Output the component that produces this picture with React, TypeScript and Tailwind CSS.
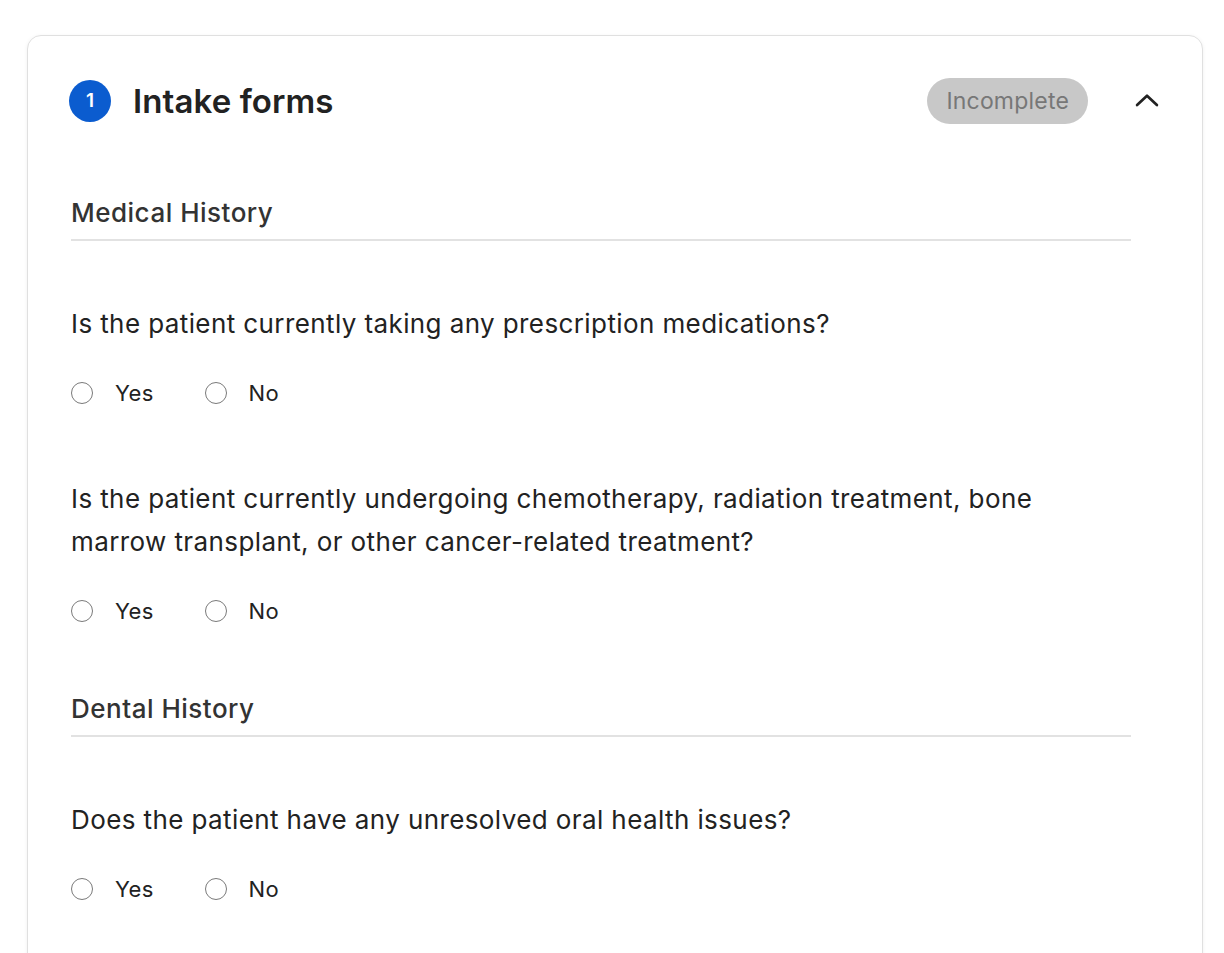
import { useState } from "react";

type Question = {
  id: string;
  text: string;
};

type Section = {
  title: string;
  questions: Question[];
};

const sections: Section[] = [
  {
    title: "Medical History",
    questions: [
      { id: "rx", text: "Is the patient currently taking any prescription medications?" },
      {
        id: "cancer",
        text: "Is the patient currently undergoing chemotherapy, radiation treatment, bone marrow transplant, or other cancer-related treatment?",
      },
    ],
  },
  {
    title: "Dental History",
    questions: [{ id: "oral", text: "Does the patient have any unresolved oral health issues?" }],
  },
];

const RadioOption = ({
  label,
  checked,
  onSelect,
}: {
  label: string;
  checked: boolean;
  onSelect: () => void;
}) => (
  <label className="flex items-center gap-[22px] cursor-pointer" onClick={onSelect}>
    <span className="flex h-[22px] w-[22px] items-center justify-center rounded-full border-[1.5px] border-[#7a7a7a] bg-white">
      {checked && <span className="h-[12px] w-[12px] rounded-full bg-[#0b5ccf]" />}
    </span>
    <span className="text-[22px] leading-[30px] text-[#222] tracking-[0.3px]">{label}</span>
  </label>
);

const QuestionBlock = ({ q, first }: { q: Question; first: boolean }) => {
  const [answer, setAnswer] = useState<string | null>(null);
  return (
    <div className={first ? "mt-[61px]" : "mt-[69px]"}>
      <p className="text-[26px] leading-[43px] text-[#222] tracking-[0.4px]">{q.text}</p>
      <div className="mt-[33px] flex items-center gap-[51px]">
        <RadioOption label="Yes" checked={answer === "yes"} onSelect={() => setAnswer("yes")} />
        <RadioOption label="No" checked={answer === "no"} onSelect={() => setAnswer("no")} />
      </div>
    </div>
  );
};

export default function App() {
  const [open, setOpen] = useState(true);
  return (
    <div className="min-h-screen bg-white pt-[35px] pl-[27px] font-['Inter',sans-serif]">
      <div className="w-[1176px] min-h-[960px] rounded-[14px] border-[1.5px] border-[#e0e0e0] bg-white shadow-[0_1px_4px_rgba(0,0,0,0.06)]">
        <div className="flex h-[46px] items-center mt-[42px] pl-[41px] pr-[40px]">
          <div className="flex h-[42px] w-[42px] items-center justify-center rounded-full bg-[#0b5ccf] text-[19px] font-semibold text-white">
            1
          </div>
          <h1 className="ml-[22px] text-[33px] leading-[46px] font-semibold text-[#222] tracking-[0.1px]">Intake forms</h1>
          <div className="ml-auto flex h-[46px] items-center rounded-full bg-[#c8c8c8] px-[19px] text-[23px] text-[#777] tracking-[0.2px]">
            Incomplete
          </div>
          <button
            className="ml-[44px] flex h-[30px] w-[30px] items-center justify-center text-[#222]"
            onClick={() => setOpen(!open)}
          >
            <svg width="28" height="28" viewBox="0 0 24 24" fill="none" stroke="currentColor" strokeWidth="2.3" strokeLinecap="round" strokeLinejoin="round">
              {open ? <path d="M3.5 15.5l8.5-8 8.5 8" /> : <path d="M3.5 8.5l8.5 8 8.5-8" />}
            </svg>
          </button>
        </div>
        {open && (
          <div className="pl-[43px] pr-[71px] pb-[40px]">
            {sections.map((s, i) => (
              <div key={s.title} className={i === 0 ? "mt-[73px]" : "mt-[67px]"}>
                <h2 className="border-b-2 border-[#e2e2e2] pb-[10px] text-[26px] leading-[32px] font-medium text-[#333] tracking-[0.5px]">
                  {s.title}
                </h2>
                {s.questions.map((q, j) => (
                  <QuestionBlock key={q.id} q={q} first={j === 0} />
                ))}
              </div>
            ))}
          </div>
        )}
      </div>
    </div>
  );
}
